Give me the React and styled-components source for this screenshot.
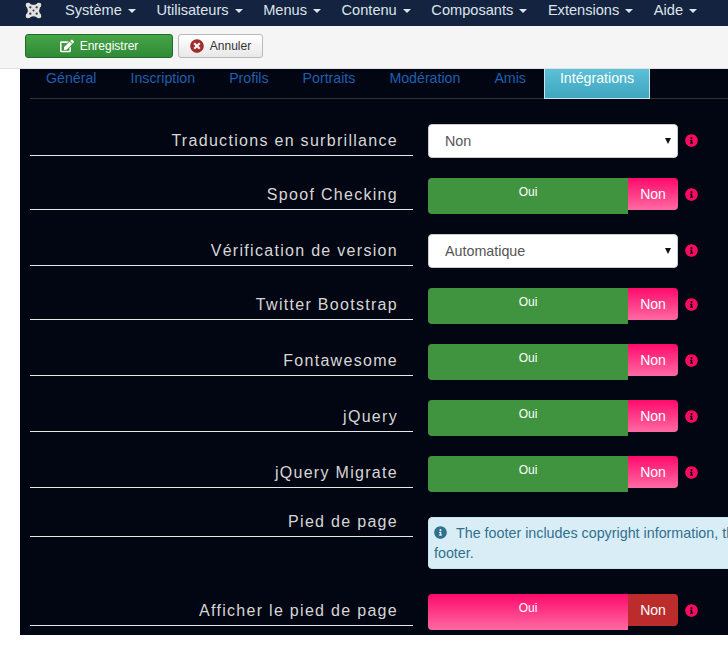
import React from "react";
import styled, { createGlobalStyle } from "styled-components";
import { FaEdit, FaInfoCircle, FaTimesCircle } from "react-icons/fa";

const GlobalStyle = createGlobalStyle`
  html, body {
    margin: 0;
    padding: 0;
    background: #fff;
    font-family: "Liberation Sans", Arial, sans-serif;
    overflow: hidden;
  }
`;

const Page = styled.div`
  width: 728px;
  height: 645px;
  overflow: hidden;
  background: #fff;
`;

const Navbar = styled.nav`
  display: flex;
  align-items: center;
  box-sizing: border-box;
  height: 26px;
  padding: 0 0 6px 25px;
  background: #132340;
`;

const Logo = styled.svg`
  width: 17px;
  height: 17px;
  margin-right: 23px;
  flex: none;
`;

const NavItem = styled.a`
  display: flex;
  align-items: center;
  margin-right: 20.6px;
  font-size: 14.6px;
  color: #dfe3ea;
  white-space: nowrap;
`;

const NavCaret = styled.span`
  width: 0;
  height: 0;
  margin-left: 6px;
  margin-top: 2px;
  border-top: 4px solid #dfe3ea;
  border-left: 4px solid transparent;
  border-right: 4px solid transparent;
`;

const Toolbar = styled.div`
  display: flex;
  gap: 5px;
  box-sizing: border-box;
  height: 43px;
  padding: 8px 25px 0;
  background: #f5f5f5;
  border-bottom: 1px solid #e0e0e0;
`;

const Button = styled.button`
  display: flex;
  align-items: center;
  justify-content: center;
  gap: 6px;
  box-sizing: border-box;
  width: ${(p) => p.$width}px;
  height: 24px;
  padding: 0;
  border-radius: 3px;
  font-family: inherit;
  font-size: 12px;
  border: 1px solid ${(p) => (p.$primary ? "#22692a" : "#b9b9b9")};
  color: ${(p) => (p.$primary ? "#fff" : "#333")};
  background: ${(p) =>
    p.$primary
      ? "linear-gradient(#46a546, #2f8a36)"
      : "linear-gradient(#ffffff, #e8e8e8)"};
`;

const Panel = styled.main`
  box-sizing: border-box;
  width: 708px;
  height: 566px;
  margin-left: 20px;
  padding-left: 10px;
  overflow: hidden;
  background: #020612;
`;

const Tabs = styled.ul`
  display: flex;
  height: 29px;
  margin: 0 0 25px;
  padding: 0;
  list-style: none;
  border-bottom: 1px solid #333;
`;

const Tab = styled.li`
  box-sizing: border-box;
  height: 30px;
  margin-right: 2px;
  padding: 1px 15px 0;
  border: 1px solid transparent;
  border-top: 0;
  font-size: 14.2px;
  line-height: 17px;
  white-space: nowrap;
  color: #1f5fb0;

  ${(p) =>
    p.$active &&
    `
    color: #fff;
    border-color: #cfe6ee;
    background: linear-gradient(#5bc0d8, #3fa6bf);
  `}
`;

const Row = styled.div`
  display: flex;
  align-items: flex-start;
  margin-bottom: 20px;
  margin-top: ${(p) => (p.$tight ? "-7px" : "0")};
`;

const Label = styled.label`
  box-sizing: border-box;
  flex: none;
  width: 383px;
  height: 32px;
  padding: 8px 15px 0 0;
  margin-right: 15px;
  text-align: right;
  font-size: 16px;
  line-height: 18px;
  letter-spacing: 1.3px;
  color: #d6d6d6;
  border-bottom: 1px solid #e6e6e6;
`;

const SelectWrap = styled.div`
  position: relative;
  width: 250px;
  height: 34px;

  &::after {
    content: "";
    position: absolute;
    right: 7px;
    top: 14px;
    border-top: 6px solid #111;
    border-left: 3.5px solid transparent;
    border-right: 3.5px solid transparent;
    pointer-events: none;
  }
`;

const Select = styled.select`
  appearance: none;
  box-sizing: border-box;
  width: 100%;
  height: 100%;
  padding: 0 16px;
  border: 1px solid #ccc;
  border-radius: 4px;
  background: #fff;
  font-family: inherit;
  font-size: 14.3px;
  color: #555;
`;

const Toggle = styled.div`
  display: flex;
  align-items: flex-start;
  width: 250px;
`;

const ToggleYes = styled.div`
  box-sizing: border-box;
  width: 200px;
  height: 36px;
  padding-top: 7px;
  border-radius: 4px 0 0 4px;
  text-align: center;
  font-size: 12px;
  line-height: 14px;
  color: #fff;
  background: ${(p) =>
    p.$pink ? "linear-gradient(#ff0a6c, #ff6aa2)" : "#409440"};
`;

const ToggleNo = styled.div`
  width: 50px;
  height: 32px;
  border-radius: 0 4px 4px 0;
  text-align: center;
  font-size: 14px;
  line-height: 32px;
  color: #fff;
  background: ${(p) =>
    p.$red ? "#bd2c2c" : "linear-gradient(#ff0a6c, #ff6aa2)"};
`;

const Hint = styled(FaInfoCircle)`
  flex: none;
  width: 13px;
  height: 13px;
  margin-left: 7px;
  margin-top: 10px;
  color: #ff0a60;
`;

const Alert = styled.div`
  box-sizing: border-box;
  flex: none;
  width: 700px;
  height: 52px;
  margin: 12px 0 5px;
  padding: 5px 5px;
  border: 1px solid #bce8f1;
  border-radius: 4px;
  background: #d9edf7;
  font-size: 14.3px;
  line-height: 20px;
  color: #31708f;
`;

const AlertIcon = styled(FaInfoCircle)`
  width: 13px;
  height: 13px;
  margin-right: 9px;
  vertical-align: -1px;
`;

const JoomlaLogo = () => (
  <Logo viewBox="0 0 24 24">
    <path
      d="M1 4 Q1 1 4 1 Q7 1 8 3 Q12 5 16 3 Q17 1 20 1 Q23 1 23 4 Q23 7 21 8 Q19 12 21 16 Q23 17 23 20 Q23 23 20 23 Q17 23 16 21 Q12 19 8 21 Q7 23 4 23 Q1 23 1 20 Q1 17 3 16 Q5 12 3 8 Q1 7 1 4 Z"
      fill="#e4e1da"
    />
    <circle cx="7.5" cy="7.5" r="1.6" fill="#1d3a6e" />
    <circle cx="16.5" cy="7.5" r="1.6" fill="#1d3a6e" />
    <circle cx="7.5" cy="16.5" r="1.6" fill="#1d3a6e" />
    <circle cx="16.5" cy="16.5" r="1.6" fill="#1d3a6e" />
    <circle cx="12" cy="12" r="1.4" fill="#1d3a6e" />
  </Logo>
);

const menus = ["Système", "Utilisateurs", "Menus", "Contenu", "Composants", "Extensions", "Aide"];
const tabs = ["Général", "Inscription", "Profils", "Portraits", "Modération", "Amis"];

const SelectRow = ({ label, value }) => (
  <Row>
    <Label>{label}</Label>
    <SelectWrap>
      <Select defaultValue={value}>
        <option>{value}</option>
      </Select>
    </SelectWrap>
    <Hint />
  </Row>
);

const ToggleRow = ({ label, footer }) => (
  <Row>
    <Label>{label}</Label>
    <Toggle>
      <ToggleYes $pink={footer}>Oui</ToggleYes>
      <ToggleNo $red={footer}>Non</ToggleNo>
    </Toggle>
    <Hint />
  </Row>
);

export default function App() {
  return (
    <Page>
      <GlobalStyle />
      <Navbar>
        <JoomlaLogo />
        {menus.map((m) => (
          <NavItem key={m}>
            {m}
            <NavCaret />
          </NavItem>
        ))}
      </Navbar>
      <Toolbar>
        <Button $primary $width={148}>
          <FaEdit size={14} />
          Enregistrer
        </Button>
        <Button $width={85}>
          <FaTimesCircle size={14} color="#a02c2c" />
          Annuler
        </Button>
      </Toolbar>
      <Panel>
        <Tabs>
          {tabs.map((t) => (
            <Tab key={t}>{t}</Tab>
          ))}
          <Tab $active>Intégrations</Tab>
        </Tabs>
        <SelectRow label="Traductions en surbrillance" value="Non" />
        <ToggleRow label="Spoof Checking" />
        <SelectRow label="Vérification de version" value="Automatique" />
        <ToggleRow label="Twitter Bootstrap" />
        <ToggleRow label="Fontawesome" />
        <ToggleRow label="jQuery" />
        <ToggleRow label="jQuery Migrate" />
        <Row $tight>
          <Label>Pied de page</Label>
          <Alert>
            <AlertIcon />
            The footer includes copyright information, the version number and a link to the project at the
            <br />
            footer.
          </Alert>
        </Row>
        <ToggleRow label="Afficher le pied de page" footer />
      </Panel>
    </Page>
  );
}
